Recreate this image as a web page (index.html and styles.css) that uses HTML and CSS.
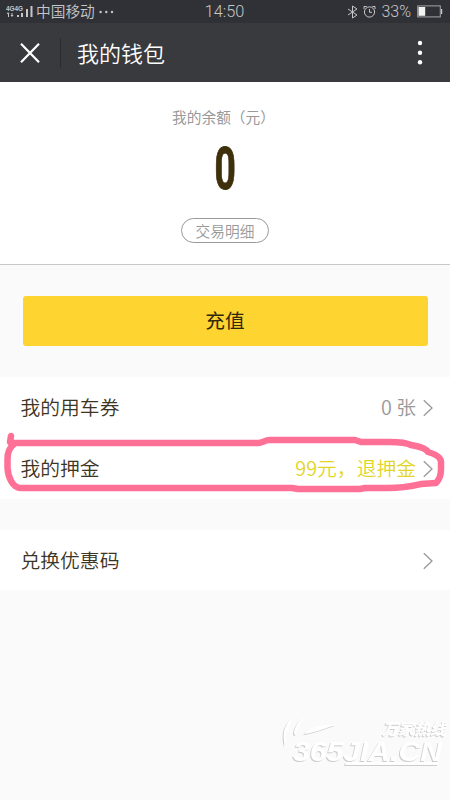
FILE: index.html
```html
<!DOCTYPE html>
<html lang="zh-CN">
<head>
<meta charset="utf-8">
<title>我的钱包</title>
<link rel="stylesheet" href="styles.css">
</head>
<body>
<main class="screen">
  <div class="status">
    <div class="carrier">
      <svg class="signal" width="27" height="14" viewBox="0 0 27 14" fill="#c6c6c9">
        <text x="0" y="5.5" class="net" textLength="17" lengthAdjust="spacingAndGlyphs">4G4G</text>
        <path d="M2 7l1.5 2H3v3H2V9H.8zM6 12l-1.5-2H5.5V8h1v2H7.5zM11 10h2v2h-2zM15 8h2v4h-2zM20 4h2v8h-2zM24.5 1h2v11h-2z"/>
      </svg>
      <span>中国移动</span>
      <svg width="15" height="4" viewBox="0 0 15 4" fill="#c6c6c9"><circle cx="1.6" cy="2" r="1.2"/><circle cx="7.3" cy="2" r="1.2"/><circle cx="13" cy="2" r="1.2"/></svg>
    </div>
    <time class="clock">14:50</time>
    <div class="device">
      <svg width="12" height="14" viewBox="0 0 12 14" fill="none" stroke="#c6c6c9" stroke-width="1"><path d="M1 4l9 6-4.5 3V1L10 4l-9 6"/></svg>
      <svg class="alarm" width="13" height="14" viewBox="0 0 13 14" fill="none" stroke="#c6c6c9" stroke-width="1"><circle cx="6.5" cy="7" r="5.1"/><path d="M6.5 4v3.3H9M1 4V1.5h2.7M12 4V1.5H9.3"/></svg>
      <span class="percent">33%</span>
      <svg width="26" height="13" viewBox="0 0 26 13"><rect x=".7" y=".9" width="22.6" height="11" fill="none" stroke="#a5a5a8"/><path fill="#f3f3f3" d="M1.5 2h6.7v8.8H1.5z"/><path fill="#c6c6c9" d="M24 4h1.2v5H24z"/></svg>
    </div>
  </div>
  <header class="bar">
    <svg class="close" width="20" height="20" viewBox="0 0 20 20" fill="none" stroke="#fff" stroke-width="2.2"><path d="M1 .8l18 18.4M19 .8L1 19.2"/></svg>
    <h1 class="title"><span>我的钱包</span></h1>
    <svg class="more" width="6" height="26" viewBox="0 0 6 26" fill="#fff"><circle cx="3" cy="3" r="2.2"/><circle cx="3" cy="12.7" r="2.2"/><circle cx="3" cy="22.3" r="2.2"/></svg>
  </header>
  <section class="balance">
    <p class="label">我的余额（元）</p>
    <p class="amount">0</p>
    <a class="details">交易明细</a>
  </section>
  <button class="recharge">充值</button>
  <div class="group">
    <div class="row"><span>我的用车券</span><span class="value">0 张</span><svg class="chevron" width="10" height="18" viewBox="0 0 10 18"><path d="M.8 1.2L9 9 .8 16.8"/></svg></div>
    <div class="row"><span>我的押金</span><span class="value refund">99元，退押金</span><svg class="chevron" width="10" height="18" viewBox="0 0 10 18"><path d="M.8 1.2L9 9 .8 16.8"/></svg>
      <svg class="marker" width="450" height="72" viewBox="0 0 450 72"><path d="M11 6L10 12L14 14C9 18 7.500 22 7.500 29V38C8 46 12 58 21 58H292L298 59H360L365 58H388C404 58 412 56 421 54L436 53C440 49 441 45 441 39V32C441 27 435 24 428 22C426 18 417 16 411 15C405 12 397 12 390 12H361L355 10H270C264 10 263 13 258 13H14"/></svg>
    </div>
  </div>
  <div class="group last">
    <div class="row"><span>兑换优惠码</span><span class="value"></span><svg class="chevron" width="10" height="18" viewBox="0 0 10 18"><path d="M.8 1.2L9 9 .8 16.8"/></svg></div>
  </div>
  <svg class="watermark" width="168" height="56" viewBox="0 0 168 56">
    <g class="shade"><path d="M3 31C-1 17 4 7 11 3C6 13 4 19 3 31zM12 19C12 11 18 4 24 2C20 8 16 12 14 20zM22 19C30 10 40 10 54 10C43 13 33 18 22 19z"/><text x="100" y="20" class="site" textLength="64" lengthAdjust="spacingAndGlyphs">万家热线</text><text x="11" y="46" class="domain" textLength="149" lengthAdjust="spacingAndGlyphs">365JIA.CN</text><path d="M64 47h93l-1 3H63z"/></g>
  </svg>
</main>
</body>
</html>
```
FILE: styles.css
```css
* { box-sizing: border-box; }
body { margin: 0; }
h1, p { margin: 0; font-weight: normal; }
.screen {
  position: relative;
  width: 450px;
  height: 800px;
  overflow: hidden;
  background: #fafafa;
  color: #3c3524;
  font-family: "Noto Sans CJK SC", sans-serif;
  font-weight: 350;
}
.status {
  display: grid;
  grid-template-columns: 1fr auto 1fr;
  align-items: center;
  height: 23px;
  padding: 0 7px 0 6px;
  background: #303136;
  color: #c6c6c9;
  font-size: 14.7px;
  line-height: 23px;
}
.carrier, .device { display: flex; align-items: center; height: 23px; }
.carrier { gap: 4px; }
.carrier span { margin: -3px 0 0 -1px; }
.carrier svg, .device svg { margin-bottom: 1px; }
.net { font: bold 6.5px "Liberation Sans", sans-serif; }
.clock { font: 300 16.3px/24px Roboto, sans-serif; }
.device { justify-content: flex-end; }
.alarm { margin-left: 4px; }
.percent { margin: -1px 6px 0 5px; font: 300 16px/23px Roboto, sans-serif; }
.bar {
  display: flex;
  align-items: center;
  height: 59px;
  padding: 0 27px 0 20px;
  background: #393a3e;
  color: #fff;
}
.title {
  display: flex;
  align-items: center;
  height: 30px;
  margin-left: 20px;
  padding-left: 16px;
  border-left: 1px solid #2b2c30;
  font-size: 22px;
  font-weight: 350;
}
.title span { margin-top: -2px; }
.more { margin-left: auto; }
.balance {
  display: flex;
  flex-direction: column;
  align-items: center;
  height: 183px;
  padding-top: 24px;
  border-bottom: 1px solid #c8c8c8;
  background: #fff;
}
.label { height: 22px; margin-right: 3px; color: #999; font-size: 14.7px; line-height: 22px; }
.amount {
  height: 62px;
  margin-top: 10px;
  color: #3d300b;
  font: bold 60px/62px Roboto, sans-serif;
  transform: scaleX(.62);
  -webkit-text-stroke: 1px #3d300b;
}
.details {
  width: 88px;
  height: 25px;
  margin-top: 18px;
  border: 1px solid #999;
  border-radius: 13px;
  color: #999;
  font-size: 14.7px;
  line-height: 23px;
  text-align: center;
}
.recharge {
  display: block;
  width: 405px;
  height: 50px;
  margin: 31px 0 31px 22.5px;
  padding: 0 0 2px;
  border: 0;
  border-radius: 3px;
  background: #fed430;
  color: #30270c;
  font: 400 19.7px/48px "Noto Sans CJK SC", sans-serif;
}
.group { background: #fff; }
.last { margin-top: 31px; }
.row {
  position: relative;
  display: flex;
  align-items: center;
  height: 61px;
  padding: 0 17px 0 20.5px;
  font-size: 19.8px;
}
.row span { margin-top: -2px; }
.last .row { height: 60px; }
.row .value { margin-left: auto; color: #999; }
.row .refund { color: #e2d527; }
.chevron { margin: 1px 0 0 7px; fill: none; stroke: #999; stroke-width: 1.3; }
.marker {
  position: absolute;
  left: 0;
  top: -8px;
  fill: none;
  stroke: #ff7096;
  stroke-width: 6.5;
  stroke-linecap: round;
  stroke-linejoin: round;
}
.watermark { position: absolute; left: 282px; top: 715px; overflow: visible; }
.shade { fill: #fff; filter: drop-shadow(-1px 1px .5px #ccc); }
.site { font: italic 900 16px "Noto Sans CJK SC", sans-serif; }
.domain { font: italic bold 27px "Liberation Sans", sans-serif; }
```
